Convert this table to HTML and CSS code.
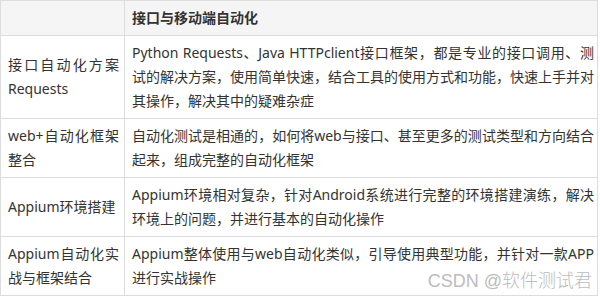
FILE: index.html
```html
<!DOCTYPE html>
<html lang="zh-CN">
<head>
<meta charset="utf-8">
<title>接口与移动端自动化</title>
<link rel="stylesheet" href="styles.css">
</head>
<body>
<div class="page">
  <table class="course">
    <colgroup>
      <col class="col-name">
      <col class="col-desc">
    </colgroup>
    <thead>
      <tr>
        <th class="name"></th>
        <th class="desc">接口与移动端自动化</th>
      </tr>
    </thead>
    <tbody>
      <tr>
        <td class="name">接口自动化方案Requests</td>
        <td class="desc">Python Requests、Java HTTPclient接口框架，都是专业的接口调用、测试的解决方案，使用简单快速，结合工具的使用方式和功能，快速上手并对其操作，解决其中的疑难杂症</td>
      </tr>
      <tr>
        <td class="name">web+自动化框架整合</td>
        <td class="desc">自动化测试是相通的，如何将web与接口、甚至更多的测试类型和方向结合起来，组成完整的自动化框架</td>
      </tr>
      <tr>
        <td class="name">Appium环境搭建</td>
        <td class="desc">Appium环境相对复杂，针对Android系统进行完整的环境搭建演练，解决环境上的问题，并进行基本的自动化操作</td>
      </tr>
      <tr>
        <td class="name">Appium自动化实战与框架结合</td>
        <td class="desc">Appium整体使用与web自动化类似，引导使用典型功能，并针对一款APP进行实战操作</td>
      </tr>
    </tbody>
  </table>
  <div class="watermark">CSDN @软件测试君</div>
</div>
</body>
</html>
```

FILE: styles.css
```css
html, body {
  margin: 0;
  padding: 0;
  background: #ffffff;
}

.page {
  position: relative;
  width: 600px;
  height: 300px;
  overflow: hidden;
}

.course {
  border-collapse: collapse;
  width: 598px;
  table-layout: fixed;
  font-family: "Noto Sans", "Noto Sans CJK SC", sans-serif;
  font-size: 14px;
  line-height: 24px;
  color: #333333;
}

.col-name {
  width: 124px;
}

.course th,
.course td {
  border: 1px solid #dddddd;
  text-align: justify;
  vertical-align: middle;
}

.course .name {
  padding: 5px 5px 5px 7px;
}

.course .desc {
  padding: 5px 3px 5px 7px;
}

.course th {
  background: #f5f5f5;
  font-weight: bold;
  height: 24px;
}

.watermark {
  position: absolute;
  right: 8px;
  bottom: 7px;
  font-family: "Liberation Sans", "Noto Sans CJK SC", sans-serif;
  font-size: 18px;
  font-weight: 300;
  line-height: 24px;
  color: #bcbcbc;
}
```
